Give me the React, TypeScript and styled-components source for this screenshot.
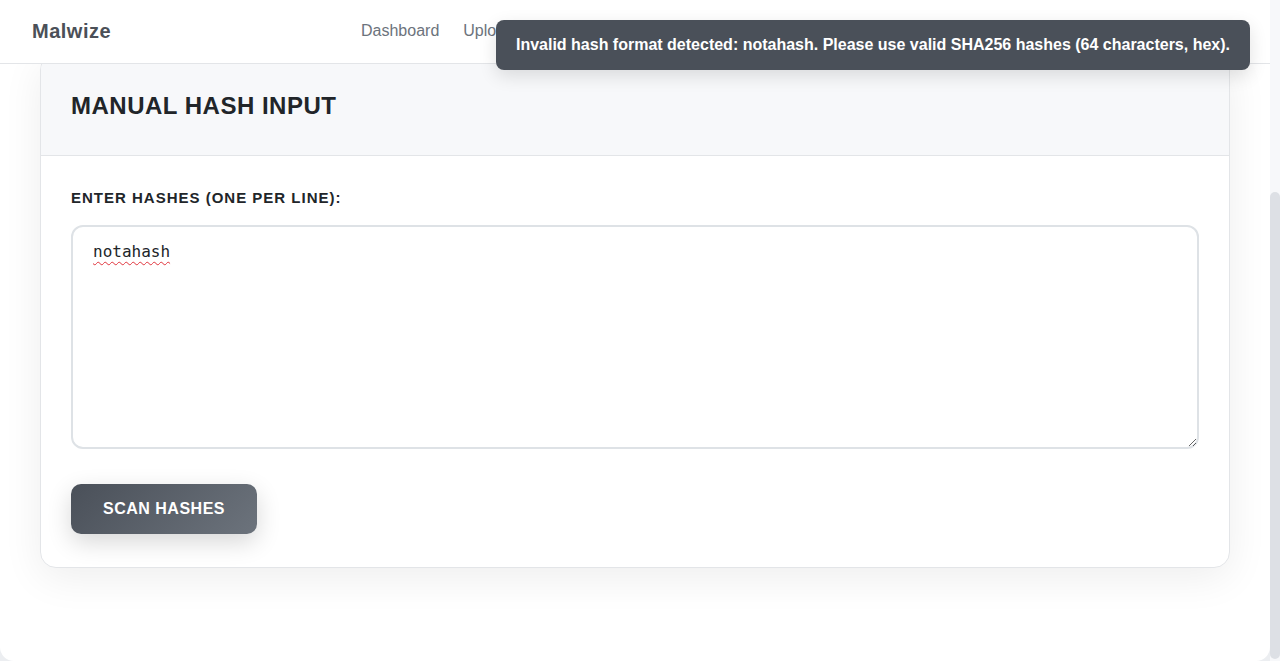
import React from "react";
import styled, { createGlobalStyle } from "styled-components";

const GlobalStyle = createGlobalStyle`
  html, body {
    margin: 0;
    padding: 0;
    height: 100%;
    overflow: hidden;
    background: #eceef1;
  }
  body {
    font-family: "Liberation Sans", Arial, sans-serif;
  }
  * { box-sizing: border-box; }
`;

const Viewport = styled.div`
  display: flex;
  width: 1280px;
  height: 661px;
`;

const Page = styled.div`
  flex: 1 1 auto;
  display: flex;
  flex-direction: column;
  position: relative;
  background: #ffffff;
  border-radius: 0 0 14px 14px;
  overflow: hidden;
`;

const Header = styled.header`
  position: relative;
  z-index: 2;
  flex: 0 0 64px;
  display: flex;
  align-items: center;
  padding: 0 32px 2px;
  background: #ffffff;
  border-bottom: 1px solid #e3e5e8;
`;

const Logo = styled.div`
  font-size: 20px;
  font-weight: 700;
  letter-spacing: 0.5px;
  color: #4b5058;
  width: 329px;
  padding-top: 2px;
`;

const Nav = styled.nav`
  display: flex;
  gap: 24px;
`;

const NavLink = styled.a`
  font-size: 16px;
  color: #6c737c;
  text-decoration: none;
`;

const Content = styled.main`
  flex: 1 1 auto;
  overflow: hidden;
  padding: 0 40px;
`;

const Card = styled.section`
  margin-top: -10px;
  background: #ffffff;
  border: 1px solid #e3e5e8;
  border-radius: 16px;
  box-shadow: 0 10px 40px rgba(0, 0, 0, 0.07);
  overflow: hidden;
`;

const CardHeader = styled.div`
  padding: 33px 30px 31px;
  background: #f7f8fa;
  border-bottom: 1px solid #e3e5e8;
`;

const Title = styled.h2`
  margin: 0;
  font-size: 24px;
  line-height: 36px;
  font-weight: 700;
  letter-spacing: 0.5px;
  color: #212529;
`;

const CardBody = styled.div`
  padding: 30px 30px 33px;
`;

const Label = styled.label`
  display: block;
  font-size: 15px;
  line-height: 24px;
  font-weight: 700;
  letter-spacing: 1px;
  color: #212529;
  margin-bottom: 15px;
`;

const HashInput = styled.textarea`
  display: block;
  width: 100%;
  height: 224px;
  padding: 15px 20px 13px;
  border: 2px solid #dee2e6;
  border-radius: 12px;
  font-family: "DejaVu Sans Mono", monospace;
  font-size: 16px;
  line-height: 20px;
  color: #212529;
  background: #ffffff;
  outline: none;
  resize: vertical;
  text-decoration: underline wavy #e0343c;
  text-decoration-thickness: 1px;
  text-underline-offset: 4px;
`;

const ScanButton = styled.button`
  display: block;
  margin-top: 35px;
  width: 186px;
  height: 50px;
  border: none;
  border-radius: 10px;
  background: linear-gradient(135deg, #4a5059 0%, #6c737c 100%);
  box-shadow: 0 8px 24px rgba(0, 0, 0, 0.16);
  color: #ffffff;
  font-family: "Liberation Sans", Arial, sans-serif;
  font-size: 16px;
  font-weight: 700;
  letter-spacing: 0.5px;
  cursor: pointer;
`;

const Toast = styled.div`
  position: absolute;
  top: 20px;
  right: 20px;
  z-index: 10;
  display: flex;
  align-items: center;
  height: 50px;
  padding: 0 20px;
  background: #4a5059;
  border-radius: 8px;
  box-shadow: 0 6px 18px rgba(0, 0, 0, 0.12);
  color: #ffffff;
  font-size: 16px;
  font-weight: 700;
  white-space: nowrap;
`;

const ScrollTrack = styled.div`
  flex: 0 0 10px;
  display: flex;
  flex-direction: column;
  background: #f7f8fa;
  padding: 192px 0 2px;
`;

const ScrollThumb = styled.div`
  flex: 1 1 auto;
  background: #dde0e5;
  border-radius: 5px;
`;

export default function App() {
  return (
    <>
      <GlobalStyle />
      <Viewport>
        <Page>
          <Header>
            <Logo>Malwize</Logo>
            <Nav>
              <NavLink href="#">Dashboard</NavLink>
              <NavLink href="#">Upload</NavLink>
              <NavLink href="#">Hash Scan</NavLink>
              <NavLink href="#">Reports</NavLink>
            </Nav>
          </Header>
          <Content>
            <Card>
              <CardHeader>
                <Title>MANUAL HASH INPUT</Title>
              </CardHeader>
              <CardBody>
                <Label htmlFor="hashes">ENTER HASHES (ONE PER LINE):</Label>
                <HashInput id="hashes" defaultValue="notahash" spellCheck={false} />
                <ScanButton type="button">SCAN HASHES</ScanButton>
              </CardBody>
            </Card>
          </Content>
          <Toast>
            Invalid hash format detected: notahash. Please use valid SHA256 hashes (64 characters, hex).
          </Toast>
        </Page>
        <ScrollTrack>
          <ScrollThumb />
        </ScrollTrack>
      </Viewport>
    </>
  );
}
